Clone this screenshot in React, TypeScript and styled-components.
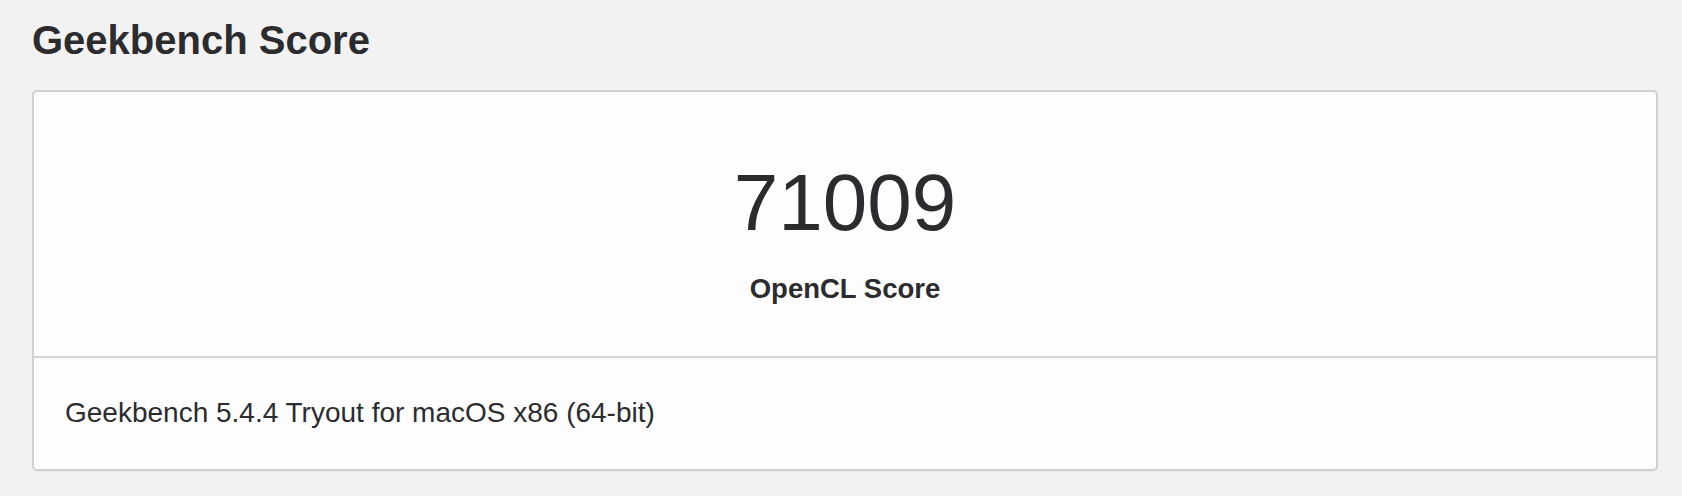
import React from "react";
import styled, { createGlobalStyle } from "styled-components";

const GlobalStyle = createGlobalStyle`
  html, body {
    margin: 0;
    padding: 0;
    background: #f2f2f2;
  }
  body {
    font-family: "Liberation Sans", Arial, Helvetica, sans-serif;
    color: #2c2c2f;
  }
`;

const Page = styled.main`
  padding: 16px 24px 20px 32px;
`;

const Title = styled.h2`
  margin: 0 0 26px;
  font-size: 40px;
  line-height: 48px;
  font-weight: 700;
  color: #2c2c2f;
`;

const Card = styled.section`
  background: #fdfdfd;
  border: 2px solid #d0d0d0;
  border-radius: 5px;
  box-shadow: 0 1px 1px rgba(0, 0, 0, 0.04);
  overflow: hidden;
`;

const ScoreArea = styled.div`
  display: flex;
  flex-direction: column;
  align-items: center;
  padding: 64px 0 51px;
`;

const ScoreValue = styled.div`
  font-size: 80px;
  line-height: 94px;
  font-weight: 400;
  color: #2c2c2f;
`;

const ScoreLabel = styled.div`
  margin-top: 23px;
  font-size: 27.5px;
  line-height: 32px;
  font-weight: 700;
  color: #2c2c2f;
`;

const Footer = styled.div`
  border-top: 2px solid #d3d3d3;
  padding: 38px 31px 39px;
  font-size: 28px;
  line-height: 34px;
  color: #2c2c2f;
`;

export default function App() {
  return (
    <>
      <GlobalStyle />
      <Page>
        <Title>Geekbench Score</Title>
        <Card>
          <ScoreArea>
            <ScoreValue>71009</ScoreValue>
            <ScoreLabel>OpenCL Score</ScoreLabel>
          </ScoreArea>
          <Footer>Geekbench 5.4.4 Tryout for macOS x86 (64-bit)</Footer>
        </Card>
      </Page>
    </>
  );
}
